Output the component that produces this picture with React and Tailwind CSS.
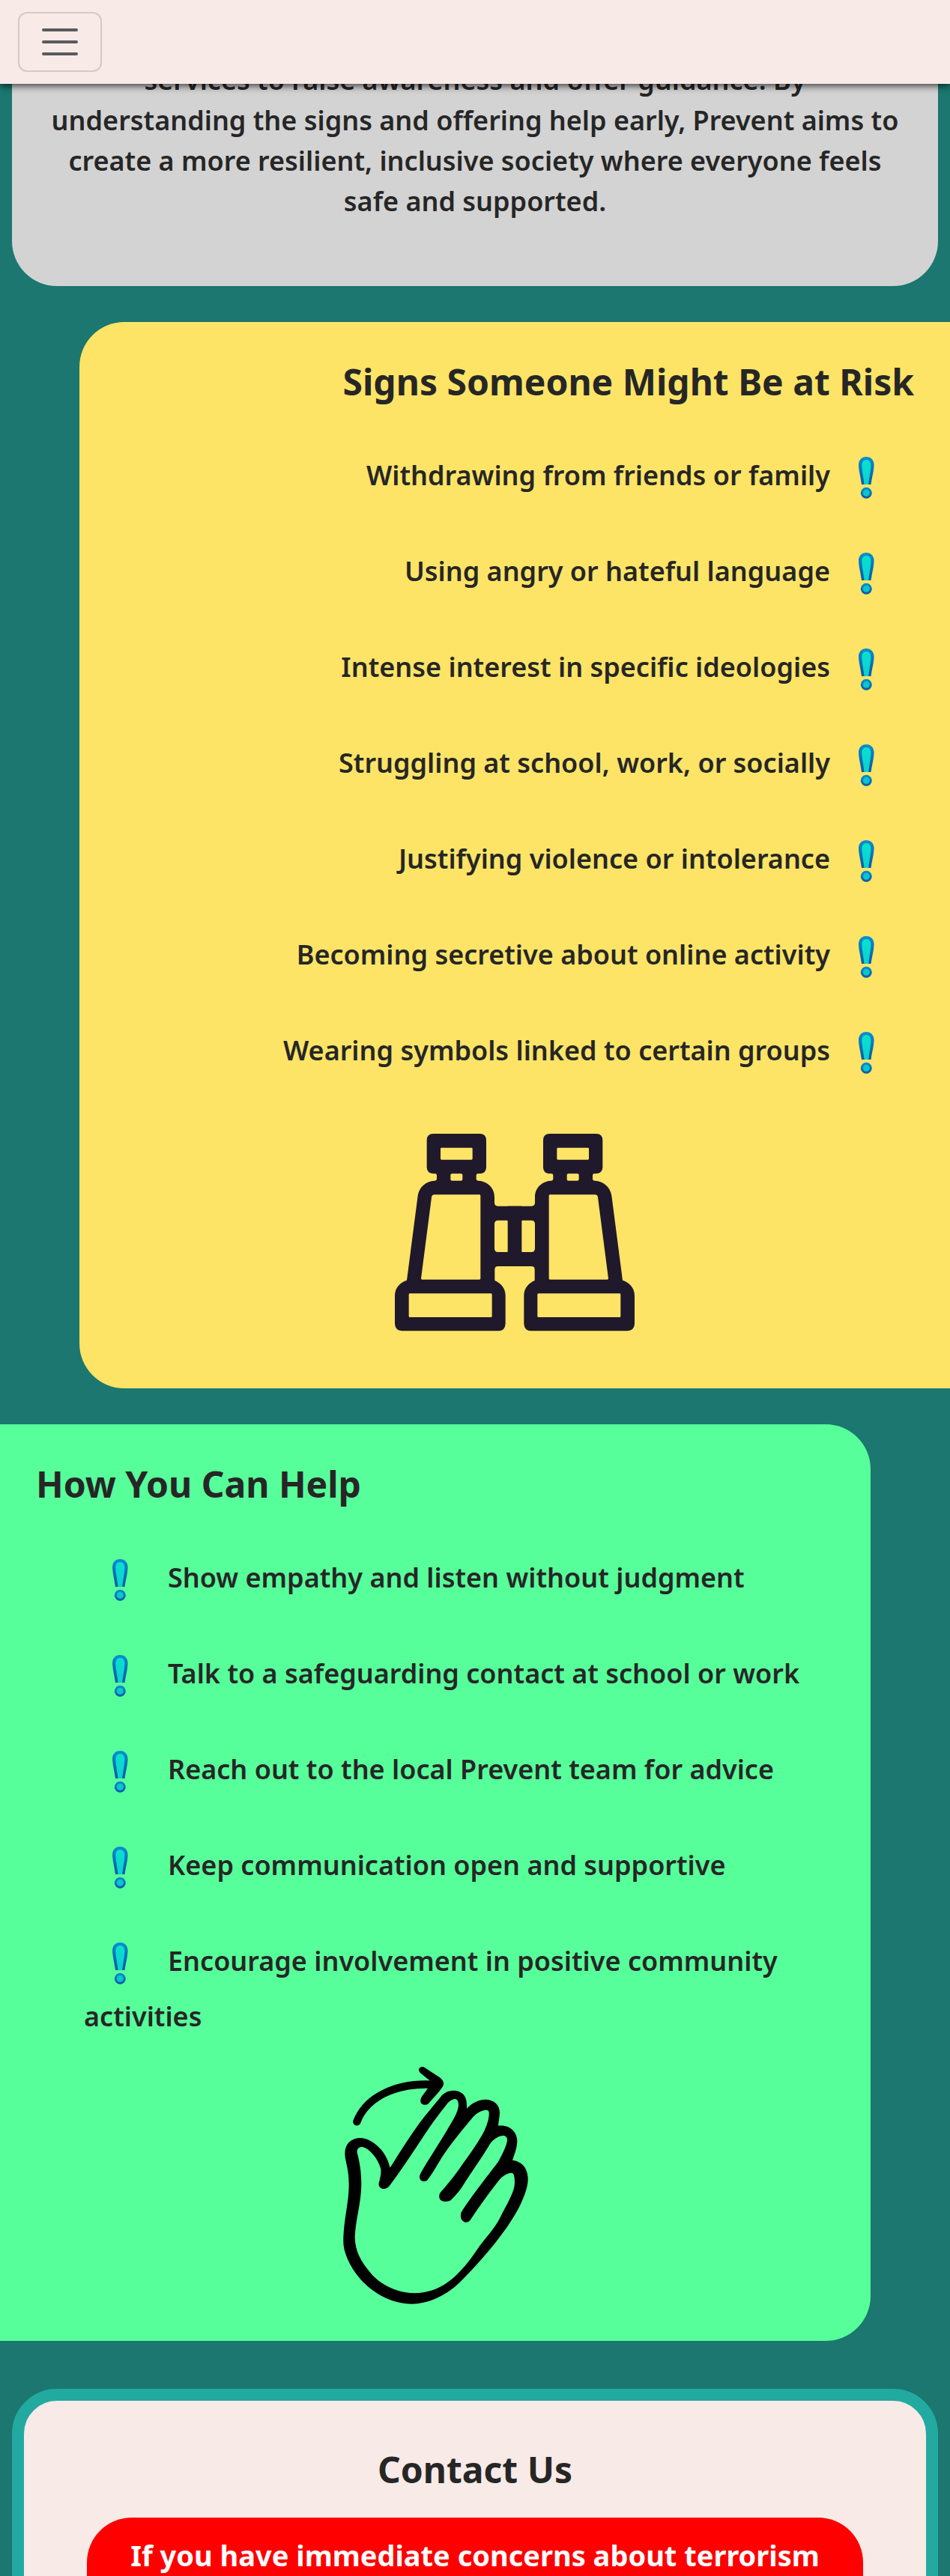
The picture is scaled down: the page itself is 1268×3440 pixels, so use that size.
const signs = [
  "Withdrawing from friends or family",
  "Using angry or hateful language",
  "Intense interest in specific ideologies",
  "Struggling at school, work, or socially",
  "Justifying violence or intolerance",
  "Becoming secretive about online activity",
  "Wearing symbols linked to certain groups",
];

const actions = [
  "Show empathy and listen without judgment",
  "Talk to a safeguarding contact at school or work",
  "Reach out to the local Prevent team for advice",
  "Keep communication open and supportive",
  "Encourage involvement in positive community activities",
];

function Exclamation({ className }) {
  return (
    <svg viewBox="0 0 64 64" aria-hidden="true" className={`inline-block size-16 align-middle ${className}`}>
      <path d="M32.3 4C26 4 21.9 8.5 22 15C22.2 23 25 33 26 41H38.5C39.5 33 42.5 23 42.6 15C42.7 8.5 38.5 4 32.3 4Z" fill="url(#mark-edge)" />
      <path d="M32.3 8C28.5 8 26.2 11 26.3 15.5C26.5 23 28.8 33 29.5 41H35.2C36 33 38.2 23 38.4 15.5C38.5 11 36 8 32.3 8Z" fill="url(#mark-fill)" />
      <circle cx="32.3" cy="52.3" r="7.5" fill="url(#mark-edge)" />
      <circle cx="32.3" cy="52.3" r="4.5" fill="#0cc4cc" />
    </svg>
  );
}

function MarkColours() {
  return (
    <svg width="0" height="0" aria-hidden="true" className="absolute">
      <defs>
        <linearGradient id="mark-edge" x1="0" y1="0" x2="0" y2="1">
          <stop offset="0" stopColor="#0a8fd0" />
          <stop offset="1" stopColor="#0859a4" />
        </linearGradient>
        <linearGradient id="mark-fill" x1="0" y1="0" x2="0" y2="1">
          <stop offset="0" stopColor="#0be0cc" />
          <stop offset="1" stopColor="#0ccfd2" />
        </linearGradient>
      </defs>
    </svg>
  );
}

function BinocularHalf() {
  return (
    <path
      fillRule="evenodd"
      d="M235 102H421Q447 102 447 128V236Q447 258 424 262H414Q407 262 407 269V283Q407 290 414 290C452 292 480 318 480 356V378Q480 392 494 392H562V449H534V576H562V633H494Q481 633 481 646V690C507 702 524 722 524 750V864Q522 892 496 892H109Q83 890 81 864V750C81 720 102 697 129 689L173 350C178 316 205 291 242 290Q249 290 249 283V269Q249 262 242 262H234Q209 258 209 236V128Q209 102 235 102ZM268 158Q264 158 264 162V202Q264 206 268 206H388Q392 206 392 202V162Q392 158 388 158ZM310 262Q304 262 304 268V284Q304 290 310 290H346Q352 290 352 284V268Q352 262 346 262ZM240 346Q229 346 228 357L186 682Q186 686 190 686H420Q424 686 424 682V350Q424 346 420 346ZM494 449Q480 449 480 463V562Q480 576 494 576H530Q534 576 534 572V453Q534 449 530 449ZM141 742Q137 742 137 746V833Q137 837 141 837H465Q470 837 470 833V746Q470 742 465 742Z"
    />
  );
}

function Binoculars() {
  return (
    <svg viewBox="81 18 960 960" role="img" aria-label="Binoculars" className="mx-auto size-80 fill-[#20192c]">
      <BinocularHalf />
      <g transform="matrix(-1 0 0 1 1122 0)">
        <BinocularHalf />
      </g>
      <rect x="533" y="392" width="56" height="241" />
    </svg>
  );
}

function WavingHand() {
  return (
    <svg viewBox="3 84 960 960" role="img" aria-label="Waving hand" className="mx-auto size-80">
      <path
        fillRule="evenodd"
        d="M180 375C145 377 120 400 121 440C122 470 137 495 137 560C137 640 115 700 115 795C117 850 160 925 215 972C270 1018 330 1040 390 1040C450 1040 520 1012 580 955C680 855 780 735 825 640C845 595 855 565 854 535C852 500 835 470 792 464C803 435 811 410 811 385C810 350 780 320 735 326C737 305 741 290 741 272C740 240 715 221 683 221C655 222 630 235 609 257C610 235 607 220 603 212C595 195 577 185 555 185C530 186 515 197 505 210L460 265C400 335 350 420 302 494C295 465 280 435 262 418C240 393 210 375 180 375ZM188 411C175 412 169 420 170 434C180 470 187 510 187 560C186 640 164 700 161 772C162 830 185 870 225 917C265 965 335 997 400 997C465 996 520 970 567 925C625 868 640 835 665 802C690 768 720 738 742 695C770 640 801 590 801 555C801 535 799 515 789 515C775 515 755 525 742 540C710 580 665 640 622 706C612 716 600 716 590 704C583 695 584 682 587 673C615 625 690 530 735 470C755 435 771 400 771 382C770 368 760 365 752 366C735 368 715 380 700 402C685 430 640 495 600 556C580 590 560 610 545 625C530 632 510 632 501 620C497 610 498 602 503 594C520 575 560 528 590 483C625 435 660 385 680 345C695 310 699 290 698 272C696 262 685 263 680 264C665 266 650 275 635 290C610 320 560 380 525 430C500 465 475 515 452 543C443 552 430 550 423 542C418 534 420 525 425 515C450 470 500 395 535 335C560 295 576 265 576 240C574 220 565 219 560 219C548 221 535 230 525 245C470 315 455 340 425 385C385 445 340 515 300 566C288 582 270 582 262 573C254 566 256 555 260 545C264 525 266 520 265 500C260 480 245 450 225 432C210 417 198 411 188 411Z"
      />
      <path d="M169 310C205 215 320 154 470 161" fill="none" stroke="#000" strokeWidth="31" strokeLinecap="round" />
      <path d="M417 100C421 90 432 88 439 92L500 132C514 142 520 154 514 167C500 190 475 215 454 239C445 245 430 243 425 234C422 225 425 216 430 208L452 178L462 146L423 115Q416 108 417 100Z" />
    </svg>
  );
}

function Heading({ children }) {
  return <h2 className="text-5xl leading-[64px] font-bold">{children}</h2>;
}

export default function App() {
  return (
    <div className="h-screen overflow-hidden bg-[#1b776f] font-['Noto_Sans',sans-serif] text-[#262626]">
      <MarkColours />
      <nav className="fixed inset-x-0 top-0 z-10 bg-[#f8eae7] px-6 py-4 shadow-[0_2px_10px_rgba(0,0,0,0.8)]">
        <button
          type="button"
          aria-label="Toggle navigation"
          className="flex h-20 w-28 items-center justify-center rounded-xl border-2 border-[#d5c8c7]"
        >
          <svg viewBox="0 0 30 30" className="size-[60px]" fill="none" stroke="#595a5c" strokeWidth="2" strokeLinecap="round">
            <path d="M4 7h22M4 15h22M4 23h22" />
          </svg>
        </button>
      </nav>

      <main className="text-4xl font-semibold">
        <section className="mx-4 rounded-b-[60px] bg-[#d3d3d3] px-12 pt-20 pb-[86px] text-center leading-[54px]">
          <p>
            services to raise awareness and offer guidance. By understanding the signs and offering help early, Prevent
            aims to create a more resilient, inclusive society where everyone feels safe and supported.
          </p>
        </section>

        <section className="mt-12 ml-auto w-11/12 rounded-l-[60px] bg-[#fde466] p-12 text-right">
          <Heading>Signs Someone Might Be at Risk</Heading>
          <ul className="mt-14 mb-[46px] flex flex-col gap-[54px] pr-8 leading-[74px]">
            {signs.map((sign) => (
              <li key={sign}>
                {sign}
                <Exclamation className="ml-4" />
              </li>
            ))}
          </ul>
          <Binoculars />
        </section>

        <section className="mt-12 w-11/12 rounded-r-[60px] bg-[#57ff9a] p-12">
          <Heading>How You Can Help</Heading>
          <ul className="mt-14 mb-7 flex flex-col gap-[54px] pl-16 leading-[74px]">
            {actions.map((action) => (
              <li key={action}>
                <Exclamation className="mr-8 ml-4" />
                {action}
              </li>
            ))}
          </ul>
          <WavingHand />
        </section>

        <section className="mx-4 mt-16 rounded-[60px] border-16 border-[#22aaa1] bg-[#f8eae7] pt-[60px] pb-12 text-center">
          <Heading>Contact Us</Heading>
          <div className="mx-auto mt-8 w-[86%] rounded-[60px] bg-[#ff0000] px-10 pt-6 pb-16 text-[38px] leading-[52px] font-bold text-white">
            <p>If you have immediate concerns about terrorism</p>
          </div>
        </section>
      </main>
    </div>
  );
}
